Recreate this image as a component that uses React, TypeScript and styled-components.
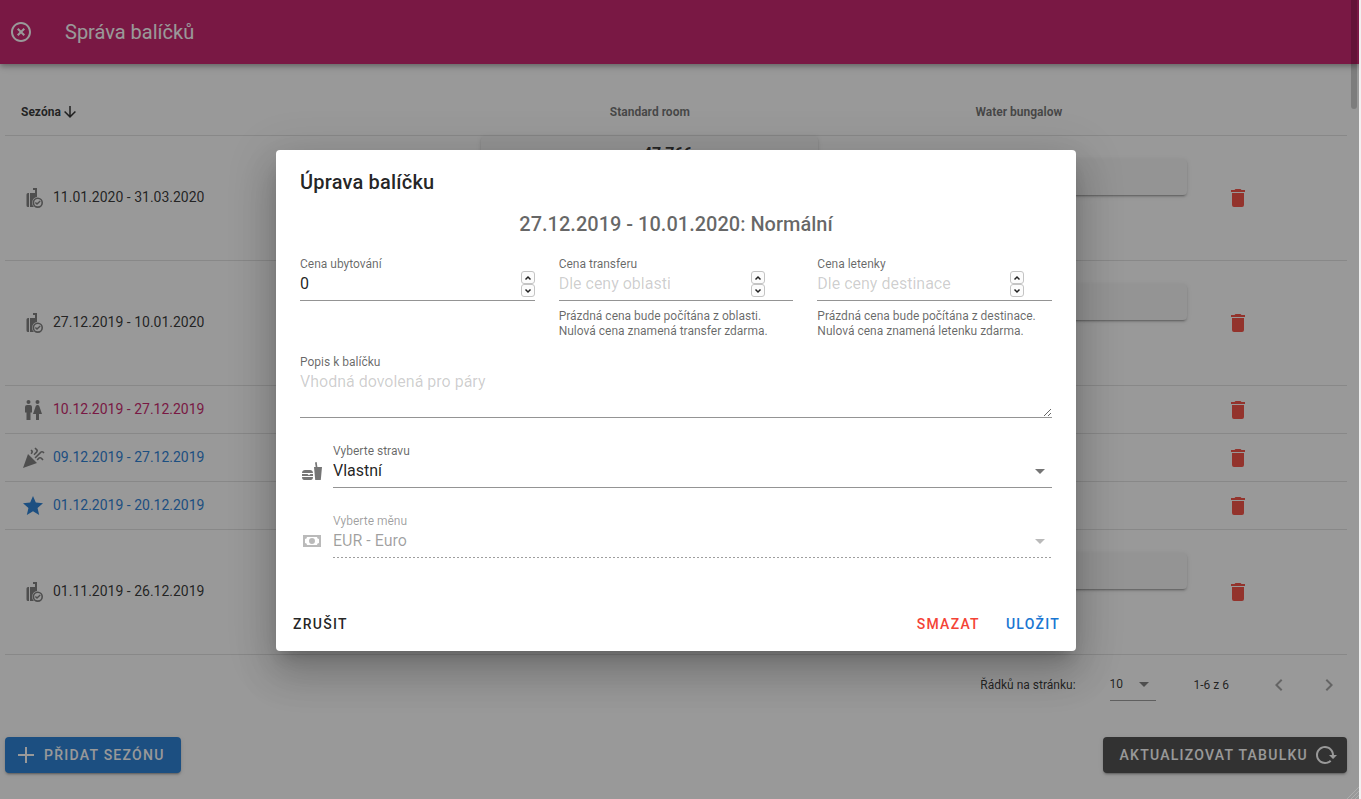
import React from "react";
import styled, { createGlobalStyle, css } from "styled-components";

const GlobalStyle = createGlobalStyle`
  *, *::before, *::after { box-sizing: border-box; }
  html, body { margin: 0; height: 100%; overflow: hidden; }
  body { background: #f1f1f1; font-family: Roboto, sans-serif; font-size: 16px; line-height: 24px; color: rgba(0,0,0,.87); }
  #root { height: 100%; }
  button, input, select, textarea { font: inherit; color: inherit; }
`;

const Shell = styled.div`
  position: relative;
  min-height: 100vh;
  margin-right: 2px;
  background: #fff;
  overflow: hidden;
`;

const Toolbar = styled.header`
  display: flex;
  align-items: center;
  gap: 32px;
  height: 64px;
  padding: 0 9px;
  background: #c51162;
  color: #fff;
  box-shadow: 0 2px 4px -1px rgba(0,0,0,.2), 0 4px 5px rgba(0,0,0,.14), 0 1px 10px rgba(0,0,0,.12);
`;

const Title = styled.h1`
  margin: 0;
  font-size: 20px;
  font-weight: 400;
  line-height: 30px;
`;

const IconButton = styled.button<{ $color?: string }>`
  display: inline-flex;
  align-items: center;
  justify-content: center;
  width: 24px;
  height: 24px;
  padding: 0;
  border: 0;
  background: none;
  color: ${(p) => p.$color ?? "inherit"};
`;

const Svg = styled.svg`
  display: block;
  flex: none;
  fill: currentColor;
`;

const Icon = ({ d, size = 24 }: { d: string; size?: number }) => (
  <Svg width={size} height={size} viewBox="0 0 24 24" aria-hidden="true">
    <path d={d} />
  </Svg>
);

const icons = {
  close:
    "M12,20C7.59,20 4,16.41 4,12C4,7.59 7.59,4 12,4C16.41,4 20,7.59 20,12C20,16.41 16.41,20 12,20M12,2C6.47,2 2,6.47 2,12C2,17.53 6.47,22 12,22C17.53,22 22,17.53 22,12C22,6.47 17.53,2 12,2M14.59,8L12,10.59L9.41,8L8,9.41L10.59,12L8,14.59L9.41,16L12,13.41L14.59,16L16,14.59L13.41,12L16,9.41L14.59,8Z",
  arrowDown:
    "M11,4H13V16L18.5,10.5L19.92,11.92L12,19.84L4.08,11.92L5.5,10.5L11,16V4Z",
  bag: "M12 2H16V11A5.800 5.800 0 0 0 13 21H9V7H14V4H12ZM8 7V21H7A1.500 1.500 0 0 1 5.500 19.500V8.500A1.500 1.500 0 0 1 7 7ZM16.800 11.500A5.200 5.200 0 1 0 16.800 21.900A5.200 5.200 0 1 0 16.800 11.500ZM16.800 13.100A3.600 3.600 0 1 1 16.800 20.300A3.600 3.600 0 1 1 16.800 13.100ZM16 18.900L13.900 16.900L14.800 16L16 17.100L18.800 14.500L19.700 15.500Z",
  family:
    "M7.5,2A2,2 0 0,1 9.5,4A2,2 0 0,1 7.5,6A2,2 0 0,1 5.5,4A2,2 0 0,1 7.5,2M6,7H9A2,2 0 0,1 11,9V14.5H9.5V22H5.5V14.5H4V9A2,2 0 0,1 6,7M16.500,2A2,2 0 0,1 18.500,4A2,2 0 0,1 16.500,6A2,2 0 0,1 14.500,4A2,2 0 0,1 16.500,2M15,22V16H12L14.590,8.410C14.840,7.590 15.600,7 16.500,7C17.400,7 18.160,7.590 18.410,8.410L21,16H18V22H15Z",
  party:
    "M14.530 1.450L13.450 2.530L15.050 4.130C15.500 4.630 15.500 5.060 15.050 5.580L12.470 8.160L13.500 9.280L16.130 6.650C17.300 5.260 17.300 4.140 16.130 3.060L14.530 1.450M10.550 3.470L9.470 4.590L10.080 5.160C10.550 5.630 10.550 6.050 10.080 6.610L9.470 7.220L10.550 8.300L11.110 7.690C12.280 6.350 12.280 5.200 11.110 4.080L10.550 3.470M21 5.060C20.310 5.060 19.690 5.330 19.180 5.860L13.500 11.530L14.580 12.610L20.200 6.940C20.780 6.350 21.300 6.350 21.840 6.940L22.450 7.550L23.530 6.470L22.920 5.860C22.330 5.330 21.690 5.060 21 5.060M7 8L2 22L16 17L7 8M19 11.060C18.310 11.060 17.690 11.330 17.180 11.860L15.580 13.450L16.660 14.530L18.260 12.940C18.840 12.350 19.370 12.350 19.900 12.940L21.550 14.580L22.580 13.450L20.980 11.860C20.370 11.330 19.700 11.060 19 11.060Z",
  star: "M12,17.27L18.18,21L16.54,13.97L22,9.24L14.81,8.62L12,2L9.19,8.62L2,9.24L7.45,13.97L5.82,21L12,17.27Z",
  trash: "M19,4H15.5L14.5,3H9.5L8.5,4H5V6H19M6,19A2,2 0 0,0 8,21H16A2,2 0 0,0 18,19V7H6V19Z",
  caret: "M7,10L12,15L17,10H7Z",
  left: "M15.41,16.58L10.83,12L15.41,7.41L14,6L8,12L14,18L15.41,16.58Z",
  right: "M8.59,16.58L13.17,12L8.59,7.41L10,6L16,12L10,18L8.59,16.58Z",
  plus: "M20,13H13V20H11V13H4V11H11V4H13V11H20V13Z",
  reload:
    "M2 12C2 16.97 6.03 21 11 21C13.39 21 15.68 20.06 17.4 18.4L15.9 16.9C14.63 18.25 12.86 19 11 19C4.76 19 1.640 11.460 6.050 7.050C10.460 2.640 18 5.770 18 12H15L19 16H19.100L23 12H20C20 7.030 15.970 3 11 3C6.030 3 2 7.030 2 12Z",
  food: "M22 8H17.400L16.700 3L15 3.400L15.700 8H14L15.200 21H20.800ZM2 14C2 12 3.300 11 5 11H10C11.700 11 13 12 13 14ZM2 15H7.500L9 16.200L10.500 15H13V17H2ZM2 18H13C13 20 12.200 21 10.800 21H4.200C2.800 21 2 20 2 18Z",
  cash: "M3,6H21V18H3V6M12,9A3,3 0 0,1 15,12A3,3 0 0,1 12,15A3,3 0 0,1 9,12A3,3 0 0,1 12,9M7,8A2,2 0 0,1 5,10V14A2,2 0 0,1 7,16H17A2,2 0 0,1 19,14V10A2,2 0 0,1 17,8H7Z",
};

const Content = styled.main`
  padding: 24px 12px 0 5px;
`;

const Table = styled.table`
  width: 100%;
  table-layout: fixed;
  border-collapse: separate;
  border-spacing: 0;
`;

const HeadCell = styled.th<{ $active?: boolean; $width: string }>`
  width: ${(p) => p.$width};
  height: 48px;
  padding: 0 16px;
  border-bottom: 1px solid rgba(0,0,0,.12);
  font-size: 12px;
  font-weight: 700;
  line-height: 18px;
  text-align: ${(p) => (p.$active ? "left" : "center")};
  color: ${(p) => (p.$active ? "rgba(0,0,0,.87)" : "rgba(0,0,0,.6)")};
`;

const SortLabel = styled.span`
  display: flex;
  align-items: center;
`;

const Cell = styled.td<{ $tall?: boolean }>`
  height: ${(p) => (p.$tall ? 125 : 48)}px;
  padding: 0 16px;
  border-bottom: 1px solid rgba(0,0,0,.12);
  font-size: 14px;
  line-height: 20px;
`;

const Season = styled.div<{ $color?: string }>`
  display: flex;
  align-items: center;
  gap: 8px;
  color: ${(p) => p.$color ?? "rgba(0,0,0,.87)"};
`;

const SeasonDates = styled.span`
  padding-bottom: 2px;
`;

const SeasonIcon = styled.span<{ $color?: string }>`
  color: ${(p) => p.$color ?? "rgba(0,0,0,.54)"};
`;

const PriceSlot = styled.div<{ $large?: boolean }>`
  height: ${(p) => (p.$large ? 124 : 79)}px;
`;

const PriceButton = styled.button<{ $large?: boolean }>`
  display: flex;
  width: 100%;
  height: ${(p) => (p.$large ? 80 : 36)}px;
  padding: 8px 0 0 36px;
  justify-content: center;
  border: 0;
  border-radius: 4px;
  background: #f5f5f5;
  font-size: 16px;
  font-weight: 700;
  box-shadow: 0 3px 1px -2px rgba(0,0,0,.2), 0 2px 2px rgba(0,0,0,.14), 0 1px 5px rgba(0,0,0,.12);
`;

const TrashCell = styled.div`
  display: flex;
  padding-left: 7px;
`;

const Footer = styled.div`
  display: flex;
  align-items: center;
  justify-content: flex-end;
  height: 59px;
  padding: 0 6px 0 0;
  font-size: 12px;
  line-height: 18px;
`;

const PageSize = styled.label`
  display: flex;
  align-items: center;
  gap: 34px;
`;

const SizeBox = styled.span`
  display: grid;
  align-items: center;
  width: 46px;
  height: 32px;
  border-bottom: 1px solid rgba(0,0,0,.42);
`;

const selectReset = css`
  appearance: none;
  width: 100%;
  padding: 0;
  border: 0;
  border-radius: 0;
  outline: 0;
  background: none;
  opacity: 1;
`;

const Select = styled.select`
  ${selectReset}
  grid-area: 1 / 1;
`;

const Caret = styled.span<{ $disabled?: boolean }>`
  grid-area: 1 / 1;
  justify-self: end;
  pointer-events: none;
  color: ${(p) => (p.$disabled ? "rgba(0,0,0,.27)" : "rgba(0,0,0,.54)")};
`;

const FieldIcon = styled.span<{ $disabled?: boolean }>`
  padding-top: 8px;
  color: ${(p) => (p.$disabled ? "rgba(0,0,0,.27)" : "rgba(0,0,0,.54)")};
`;

const Range = styled.span`
  margin: 0 38px;
`;

const Pager = styled.nav`
  display: flex;
  gap: 26px;
  color: rgba(0,0,0,.38);
`;

const Actions = styled.div`
  display: flex;
  justify-content: space-between;
  padding: 23px 0 26px;
`;

const SolidButton = styled.button<{ $bg: string }>`
  display: flex;
  align-items: center;
  gap: 6px;
  height: 36px;
  padding: 0 16px 0 9px;
  border: 0;
  border-radius: 4px;
  background: ${(p) => p.$bg};
  color: #fff;
  font-size: 14px;
  font-weight: 500;
  letter-spacing: 0.09em;
  text-transform: uppercase;
  box-shadow: 0 3px 1px -2px rgba(0,0,0,.2), 0 2px 2px rgba(0,0,0,.14), 0 1px 5px rgba(0,0,0,.12);
`;

const ReloadButton = styled(SolidButton)`
  padding: 0 9px 0 17px;
`;

const ScrollThumb = styled.div`
  position: absolute;
  top: 0;
  right: 2px;
  width: 6px;
  height: 109px;
  border-radius: 0 0 3px 3px;
  background: rgba(0,0,0,.18);
`;

const ResizeGrip = styled.svg`
  position: absolute;
  right: 0;
  bottom: 0;
  fill: none;
  stroke: rgba(255,255,255,.2);
`;

const Overlay = styled.div`
  position: absolute;
  inset: 0;
  display: flex;
  align-items: center;
  justify-content: center;
  padding: 2px 7px 0 0;
  background: rgba(33,33,33,.46);
`;

const Dialog = styled.form`
  width: 100%;
  max-width: 800px;
  border-radius: 4px;
  background: #fff;
  box-shadow: 0 11px 15px -7px rgba(0,0,0,.2), 0 24px 38px 3px rgba(0,0,0,.14), 0 9px 46px 8px rgba(0,0,0,.12);
`;

const DialogTitle = styled.h2`
  margin: 0;
  padding: 16px 24px 10px;
  font-size: 20px;
  font-weight: 500;
  line-height: 32px;
  letter-spacing: 0.01em;
`;

const DialogBody = styled.div`
  padding: 0 24px;
  color: rgba(0,0,0,.6);
`;

const Subtitle = styled.h3`
  margin: 0 0 18px;
  font-size: 20px;
  font-weight: 500;
  line-height: 32px;
  text-align: center;
`;

const Prices = styled.div`
  display: grid;
  grid-template-columns: repeat(3, minmax(0, 1fr));
  gap: 24px;
  height: 98px;
`;

const Label = styled.label<{ $disabled?: boolean }>`
  display: block;
  font-size: 12px;
  line-height: 12px;
  color: ${(p) => (p.$disabled ? "rgba(0,0,0,.38)" : "rgba(0,0,0,.6)")};
`;

const InputLine = styled.div<{ $inset: number }>`
  display: flex;
  align-items: center;
  height: 31px;
  padding: 0 ${(p) => p.$inset}px 2px 0;
  border-bottom: 1px solid rgba(0,0,0,.42);
`;

const Input = styled.input`
  flex: 1;
  min-width: 0;
  padding: 0;
  border: 0;
  outline: 0;
  background: none;
  color: rgba(0,0,0,.87);
  &::placeholder { color: rgba(0,0,0,.2); opacity: 1; }
`;

const Stepper = styled.span`
  display: flex;
  flex-direction: column;
`;

const StepButton = styled.button`
  display: flex;
  align-items: center;
  justify-content: center;
  width: 14px;
  height: 13px;
  padding: 0;
  border: 1px solid #c4c4c4;
  border-radius: 3px;
  background: #fcfcfc;
  color: #222;
`;

const StepIcon = styled.svg`
  fill: none;
  stroke: currentColor;
  stroke-width: 1.5;
`;

const Hint = styled.p`
  margin: 8px 0 0;
  font-size: 12px;
  line-height: 15px;
  white-space: nowrap;
`;

const Textarea = styled.textarea`
  display: block;
  width: 100%;
  height: 50px;
  padding: 2px 0 0;
  border: 0;
  border-bottom: 1px solid rgba(0,0,0,.42);
  outline: 0;
  background: none;
  color: rgba(0,0,0,.87);
  &::placeholder { color: rgba(0,0,0,.2); opacity: 1; }
`;

const SelectRow = styled.div`
  display: flex;
  align-items: center;
  gap: 9px;
  margin-top: 27px;
  height: 43px;
`;

const SelectField = styled.div`
  flex: 1;
`;

const dashedLine = css`
  border-bottom: 0;
  padding-bottom: 3px;
  background: repeating-linear-gradient(to right, rgba(0,0,0,.38) 0 2px, transparent 2px 4px) bottom / 100% 1px no-repeat;
  color: rgba(0,0,0,.38);
`;

const SelectLine = styled.div<{ $disabled?: boolean }>`
  display: grid;
  align-items: center;
  height: 31px;
  padding-bottom: 2px;
  border-bottom: 1px solid rgba(0,0,0,.42);
  color: rgba(0,0,0,.87);
  ${(p) => p.$disabled && dashedLine}
`;

const DialogActions = styled.div`
  display: flex;
  gap: 10px;
  padding: 48px 8px 9px 9px;
`;

const TextButton = styled.button<{ $color?: string; $push?: boolean }>`
  height: 36px;
  padding: 0 8px;
  margin-right: ${(p) => (p.$push ? "auto" : "0")};
  border: 0;
  background: none;
  color: ${(p) => p.$color ?? "rgba(0,0,0,.87)"};
  font-size: 14px;
  font-weight: 500;
  letter-spacing: 0.09em;
  text-transform: uppercase;
`;

type SeasonRow = {
  dates: string;
  icon: keyof typeof icons;
  color?: string;
  iconColor?: string;
  tall?: boolean;
  price?: string;
};

const rows: SeasonRow[] = [
  { dates: "11.01.2020 - 31.03.2020", icon: "bag", tall: true, price: "47 766" },
  { dates: "27.12.2019 - 10.01.2020", icon: "bag", tall: true },
  { dates: "10.12.2019 - 27.12.2019", icon: "family", color: "#c51162" },
  { dates: "09.12.2019 - 27.12.2019", icon: "party", color: "#1976d2" },
  { dates: "01.12.2019 - 20.12.2019", icon: "star", color: "#1976d2", iconColor: "#1976d2" },
  { dates: "01.11.2019 - 26.12.2019", icon: "bag", tall: true },
];

type PriceFieldProps = {
  id: string;
  label: string;
  value?: string;
  placeholder?: string;
  inset?: number;
  hint?: string[];
};

const PriceField = ({ id, label, value, placeholder, inset = 0, hint }: PriceFieldProps) => (
  <div>
    <Label htmlFor={id}>{label}</Label>
    <InputLine $inset={inset}>
      <Input id={id} inputMode="numeric" defaultValue={value} placeholder={placeholder} />
      <Stepper>
        <StepButton type="button" aria-label="Zvýšit">
          <StepIcon width="8" height="6" viewBox="0 0 8 6"><path d="M1.500 4.500L4 2L6.500 4.500" /></StepIcon>
        </StepButton>
        <StepButton type="button" aria-label="Snížit">
          <StepIcon width="8" height="6" viewBox="0 0 8 6"><path d="M1.500 1.500L4 4L6.500 1.500" /></StepIcon>
        </StepButton>
      </Stepper>
    </InputLine>
    {hint && <Hint>{hint[0]}<br />{hint[1]}</Hint>}
  </div>
);

type SelectProps = { id: string; label: string; value: string; icon: keyof typeof icons; disabled?: boolean };

const SelectInput = ({ id, label, value, icon, disabled }: SelectProps) => (
  <SelectRow>
    <FieldIcon $disabled={disabled}><Icon d={icons[icon]} /></FieldIcon>
    <SelectField>
      <Label htmlFor={id} $disabled={disabled}>{label}</Label>
      <SelectLine $disabled={disabled}>
        <Select id={id} disabled={disabled}><option>{value}</option></Select>
        <Caret $disabled={disabled}><Icon d={icons.caret} /></Caret>
      </SelectLine>
    </SelectField>
  </SelectRow>
);

export default function App() {
  return (
    <>
      <GlobalStyle />
      <Shell>
        <Toolbar>
          <IconButton aria-label="Zavřít"><Icon d={icons.close} /></IconButton>
          <Title>Správa balíčků</Title>
        </Toolbar>
        <Content>
          <Table>
            <thead>
              <tr>
                <HeadCell $active $width="34.3%">
                  <SortLabel>Sezóna<Icon d={icons.arrowDown} size={18} /></SortLabel>
                </HeadCell>
                <HeadCell $width="27.5%">Standard room</HeadCell>
                <HeadCell $width="27.5%">Water bungalow</HeadCell>
                <HeadCell $width="10.7%" />
              </tr>
            </thead>
            <tbody>
              {rows.map((row) => (
                <tr key={row.dates}>
                  <Cell $tall={row.tall}>
                    <Season $color={row.color}>
                      <SeasonIcon $color={row.iconColor}><Icon d={icons[row.icon]} /></SeasonIcon>
                      <SeasonDates>{row.dates}</SeasonDates>
                    </Season>
                  </Cell>
                  <Cell $tall={row.tall}>
                    {row.price && (
                      <PriceSlot $large><PriceButton $large>{row.price}</PriceButton></PriceSlot>
                    )}
                  </Cell>
                  <Cell $tall={row.tall}>
                    {row.tall && <PriceSlot><PriceButton aria-label="Cena" /></PriceSlot>}
                  </Cell>
                  <Cell $tall={row.tall}>
                    <TrashCell>
                      <IconButton $color="#f44336" aria-label="Smazat sezónu"><Icon d={icons.trash} /></IconButton>
                    </TrashCell>
                  </Cell>
                </tr>
              ))}
            </tbody>
          </Table>
          <Footer>
            <PageSize>
              Řádků na stránku:
              <SizeBox>
                <Select><option>10</option></Select>
                <Caret><Icon d={icons.caret} /></Caret>
              </SizeBox>
            </PageSize>
            <Range>1-6 z 6</Range>
            <Pager>
              <IconButton aria-label="Předchozí"><Icon d={icons.left} /></IconButton>
              <IconButton aria-label="Další"><Icon d={icons.right} /></IconButton>
            </Pager>
          </Footer>
          <Actions>
            <SolidButton $bg="#1976d2"><Icon d={icons.plus} />Přidat sezónu</SolidButton>
            <ReloadButton $bg="#424242">Aktualizovat tabulku<Icon d={icons.reload} /></ReloadButton>
          </Actions>
        </Content>
        <Overlay>
          <Dialog role="dialog" aria-labelledby="dialog-title">
            <DialogTitle id="dialog-title">Úprava balíčku</DialogTitle>
            <DialogBody>
              <Subtitle>27.12.2019 - 10.01.2020: Normální</Subtitle>
              <Prices>
                <PriceField id="stay" label="Cena ubytování" value="0" />
                <PriceField
                  id="transfer"
                  label="Cena transferu"
                  placeholder="Dle ceny oblasti"
                  inset={28}
                  hint={["Prázdná cena bude počítána z oblasti.", "Nulová cena znamená transfer zdarma."]}
                />
                <PriceField
                  id="flight"
                  label="Cena letenky"
                  placeholder="Dle ceny destinace"
                  inset={28}
                  hint={["Prázdná cena bude počítána z destinace.", "Nulová cena znamená letenku zdarma."]}
                />
              </Prices>
              <Label htmlFor="note">Popis k balíčku</Label>
              <Textarea id="note" placeholder="Vhodná dovolená pro páry" />
              <SelectInput id="board" label="Vyberte stravu" value="Vlastní" icon="food" />
              <SelectInput id="currency" label="Vyberte měnu" value="EUR - Euro" icon="cash" disabled />
            </DialogBody>
            <DialogActions>
              <TextButton type="button" $push>Zrušit</TextButton>
              <TextButton type="button" $color="#f44336">Smazat</TextButton>
              <TextButton type="submit" $color="#1976d2">Uložit</TextButton>
            </DialogActions>
          </Dialog>
        </Overlay>
        <ScrollThumb />
        <ResizeGrip width="14" height="14" viewBox="0 0 14 14" aria-hidden="true">
          <path d="M2 14L14 2M6 14L14 6M10 14L14 10" />
        </ResizeGrip>
      </Shell>
    </>
  );
}
